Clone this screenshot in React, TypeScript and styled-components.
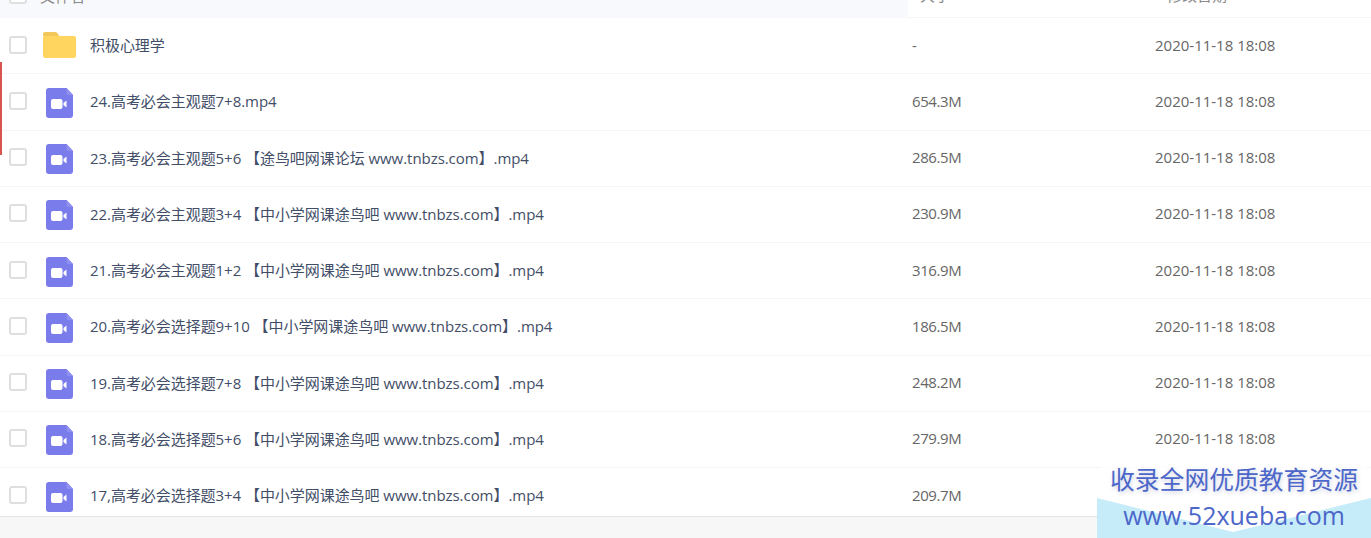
import styled, { createGlobalStyle } from 'styled-components'

const files = [
  { name: '24.高考必会主观题7+8.mp4', size: '654.3M' },
  { name: '23.高考必会主观题5+6 【途鸟吧网课论坛 www.tnbzs.com】.mp4', size: '286.5M' },
  { name: '22.高考必会主观题3+4 【中小学网课途鸟吧 www.tnbzs.com】.mp4', size: '230.9M' },
  { name: '21.高考必会主观题1+2 【中小学网课途鸟吧 www.tnbzs.com】.mp4', size: '316.9M' },
  { name: '20.高考必会选择题9+10 【中小学网课途鸟吧 www.tnbzs.com】.mp4', size: '186.5M' },
  { name: '19.高考必会选择题7+8 【中小学网课途鸟吧 www.tnbzs.com】.mp4', size: '248.2M' },
  { name: '18.高考必会选择题5+6 【中小学网课途鸟吧 www.tnbzs.com】.mp4', size: '279.9M' },
  { name: '17,高考必会选择题3+4 【中小学网课途鸟吧 www.tnbzs.com】.mp4', size: '209.7M' },
]

const DATE = '2020-11-18 18:08'

const GlobalStyle = createGlobalStyle`
  html, body {
    margin: 0;
    height: 100%;
    background: #fff;
    overflow: hidden;
  }
  #root {
    height: 100%;
  }
`

const Page = styled.div`
  position: relative;
  display: flex;
  flex-direction: column;
  height: 538px;
  overflow: hidden;
  font-family: 'Open Sans', 'Noto Sans CJK SC', sans-serif;
  font-size: 15px;
`

const List = styled.div`
  height: 516px;
  overflow: hidden;
`

const Footer = styled.div`
  flex: 1;
  background: #f7f7f7;
  border-top: 1px solid #e4e4e4;
`

const Header = styled.div`
  display: grid;
  grid-template-columns: 908px 246px 1fr;
  height: 46px;
  margin-top: -28px;
  color: #888;
`

const NameHead = styled.div`
  display: flex;
  align-items: center;
  background: #f8f9fd;
`

const HeadCell = styled.div<{ $indent: number }>`
  display: flex;
  align-items: center;
  padding-left: ${(p) => p.$indent}px;
  border-bottom: 1px solid #f6f6f6;
`

const Row = styled.div`
  display: grid;
  grid-template-columns: 908px 246px 1fr;
  height: 56.25px;
  box-sizing: border-box;
  padding-bottom: 2px;
  align-items: center;
  border-bottom: 1px solid #f5f5f5;
`

const NameCell = styled.div`
  display: flex;
  align-items: center;
`

const Checkbox = styled.span`
  box-sizing: border-box;
  flex: none;
  width: 18px;
  height: 18px;
  margin-left: 9px;
  border: 2px solid #dfdfdf;
  border-radius: 3px;
  background: #fff;
`

const IconSlot = styled.span<{ $drop?: number }>`
  flex: none;
  display: flex;
  justify-content: center;
  width: 33px;
  margin-left: 16px;
  padding-top: ${(p) => p.$drop ?? 0}px;
`

const FileName = styled.span`
  margin-left: 14px;
  color: #424e67;
  white-space: nowrap;
  letter-spacing: -0.05px;
`

const HeadName = styled.span`
  margin-left: -36px;
`

const Size = styled.div`
  padding-left: 4px;
  color: #666;
  letter-spacing: -0.4px;
`

const DateText = styled.div`
  padding-left: 1px;
  color: #666;
`

const RedMark = styled.div`
  position: absolute;
  left: 0;
  top: 62px;
  width: 1.5px;
  height: 93px;
  background: #d9534f;
`

const Watermark = styled.div`
  position: absolute;
  right: 0;
  bottom: 0;
  width: 274px;
  height: 78px;
`

const Banner = styled.svg`
  position: absolute;
  left: 0;
  bottom: 0;
  width: 274px;
  height: 78px;
`

const Slogan = styled.div`
  position: relative;
  text-align: center;
  margin-top: 3px;
  font-family: 'Noto Sans CJK SC', sans-serif;
  font-size: 24.8px;
  line-height: 30px;
  color: #4c67c9;
  white-space: nowrap;
  text-shadow: 1px 2px 4px rgba(120, 130, 170, 0.35);
`

const Site = styled.div`
  position: relative;
  margin-top: 5px;
  text-align: center;
  font-family: 'Open Sans', sans-serif;
  font-size: 25px;
  line-height: 34px;
  color: #4c67c9;
  white-space: nowrap;
`

const FolderIcon = () => (
  <svg width="33" height="26" viewBox="0 0 33 26">
    <path d="M0 2a2 2 0 0 1 2-2h10a3 3 0 0 1 2.400 1.200L16.500 4H0z" fill="#f2c65a" />
    <path d="M0 5.500a1.500 1.500 0 0 1 1.500-1.500H31a2 2 0 0 1 2 2v17.500a2.500 2.500 0 0 1-2.500 2.500H2.500A2.500 2.500 0 0 1 0 23.500z" fill="#ffd45f" />
  </svg>
)

const VideoIcon = () => (
  <svg width="27" height="30" viewBox="0 0 27 30">
    <path d="M3 0h17.500L27 7v20a3 3 0 0 1-3 3H3a3 3 0 0 1-3-3V3a3 3 0 0 1 3-3z" fill="#7b7cec" />
    <path d="M20.500 0L27 7h-4.500a2 2 0 0 1-2-2z" fill="#8f90f0" />
    <rect x="5" y="11" width="11.500" height="10" rx="2" fill="#fff" />
    <path d="M17.500 15l3-2.500v7l-3-2.500z" fill="#fff" />
  </svg>
)

const App = () => {
  return (
    <Page>
      <GlobalStyle />
      <List>
        <Header>
          <NameHead>
            <Checkbox />
            <IconSlot />
            <HeadName>文件名</HeadName>
          </NameHead>
          <HeadCell $indent={12}>大小</HeadCell>
          <HeadCell $indent={13}>修改日期</HeadCell>
        </Header>
        <Row>
          <NameCell>
            <Checkbox />
            <IconSlot $drop={1}><FolderIcon /></IconSlot>
            <FileName>积极心理学</FileName>
          </NameCell>
          <Size>-</Size>
          <DateText>{DATE}</DateText>
        </Row>
        {files.map((f) => (
          <Row key={f.name}>
            <NameCell>
              <Checkbox />
              <IconSlot $drop={4}><VideoIcon /></IconSlot>
              <FileName>{f.name}</FileName>
            </NameCell>
            <Size>{f.size}</Size>
            <DateText>{DATE}</DateText>
          </Row>
        ))}
      </List>
      <Footer />
      <RedMark />
      <Watermark>
        <Banner viewBox="0 0 274 78">
          <defs>
            <linearGradient id="fade" x1="0" y1="0" x2="0" y2="1">
              <stop offset="0" stopColor="#fff" stopOpacity="0" />
              <stop offset="0.15" stopColor="#fff" />
            </linearGradient>
          </defs>
          <path d="M4 0H270V40L137 73L4 40z" fill="url(#fade)" />
          <path d="M0 38L136 72L274 38V78H0z" fill="#c6ecfa" />
        </Banner>
        <Slogan>收录全网优质教育资源</Slogan>
        <Site>www.52xueba.com</Site>
      </Watermark>
    </Page>
  )
}

export default App
